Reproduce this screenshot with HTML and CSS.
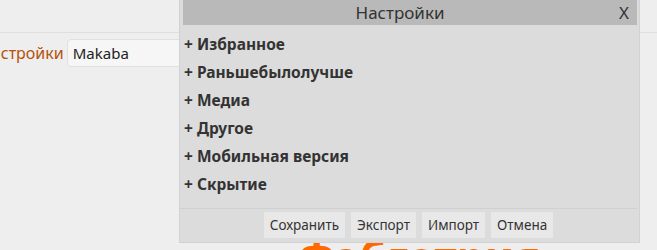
FILE: index.html
```html
<!DOCTYPE html>
<html lang="ru">
<head>
  <meta charset="UTF-8" />
  <title>Настройки</title>
  <link rel="stylesheet" href="styles.css">
</head>
<body>
  <div class="topline"></div>

  <div class="settings-row">
    <span class="settings-label">Настройки</span>
    <input class="settings-input" type="text" value="Makaba" />
  </div>

  <div class="logo">Фэбготрия</div>

  <div class="modal">
    <div class="modal-head">
      <span class="modal-title">Настройки</span>
      <span class="modal-close">X</span>
    </div>
    <div class="modal-body">
      <div class="section">+ Избранное</div>
      <div class="section">+ Раньшебылолучше</div>
      <div class="section">+ Медиа</div>
      <div class="section">+ Другое</div>
      <div class="section">+ Мобильная версия</div>
      <div class="section">+ Скрытие</div>
    </div>
    <div class="modal-foot">
      <button>Сохранить</button>
      <button>Экспорт</button>
      <button>Импорт</button>
      <button>Отмена</button>
    </div>
  </div>
</body>
</html>
```

FILE: styles.css
```css
body {
  margin: 0;
  background-color: #eeeeee;
  font-family: 'Noto Sans', 'Open Sans', sans-serif;
  color: #333;
  overflow: hidden;
}

.topline {
  height: 32px;
  border-bottom: 1px solid #dedede;
}

.settings-row {
  display: flex;
  align-items: center;
  gap: 3px;
  margin-top: 6px;
  margin-left: -20px;
}

.settings-label {
  font-size: 16px;
  color: #b4520c;
}

.settings-input {
  width: 200px;
  height: 28px;
  padding: 0 5px;
  font-family: inherit;
  font-size: 15px;
  color: #222;
  background: #f6f6f6;
  border: 1px solid #e0e0e0;
  border-radius: 4px;
  box-sizing: border-box;
}

.logo {
  margin-top: 160px;
  margin-left: 297px;
  font-size: 44px;
  font-weight: bold;
  color: #ff6a00;
}

.modal {
  position: absolute;
  left: 179px;
  top: 0;
  width: 461px;
  height: 243px;
  padding: 0 2px 0 3px;
  background: #dcdcdc;
  border: 1px solid #d2d2d2;
  border-top: none;
  box-sizing: border-box;
  display: flex;
  flex-direction: column;
}

.modal-head {
  position: relative;
  height: 25px;
  padding-right: 20px;
  background: #b9b9b9;
  text-align: center;
  line-height: 25px;
  font-size: 17px;
}

.modal-close {
  position: absolute;
  right: 8px;
  top: 0;
  font-size: 17px;
}

.modal-body {
  padding-top: 5px;
  height: 178px;
}

.section {
  height: 28px;
  line-height: 28px;
  padding-left: 1px;
  font-size: 15.5px;
  font-weight: bold;
}

.modal-foot {
  border-top: 1px solid #d0d0d0;
  display: flex;
  justify-content: center;
  gap: 6px;
  padding-top: 3px;
  margin-left: -3px;
}

.modal-foot button {
  height: 26px;
  padding: 0 6px;
  font-family: inherit;
  font-size: 13.5px;
  color: #333;
  background: #e8e8e8;
  border: none;
  border-radius: 0;
}
```
